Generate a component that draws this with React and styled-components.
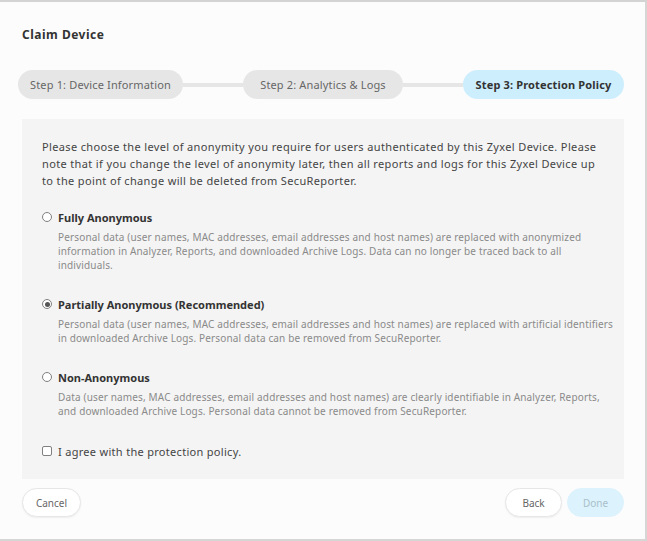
import React from "react";
import styled, { createGlobalStyle } from "styled-components";

const Global = createGlobalStyle`
  html, body { margin: 0; padding: 0; background: #ffffff; }
  * { box-sizing: border-box; }
  body { font-family: "Noto Sans", "Open Sans", Arial, sans-serif; }
`;

const Dialog = styled.div`
  width: 647px;
  height: 541px;
  background: #fcfcfc;
  border-top: 2px solid #d3d3d3;
  border-right: 2px solid #d6d6d6;
  border-bottom: 2px solid #d6d6d6;
  padding: 25px 21px 0 22px;
  display: flex;
  flex-direction: column;
`;

const Title = styled.h1`
  margin: 0;
  font-size: 12px;
  line-height: 16px;
  letter-spacing: 0.5px;
  font-weight: 700;
  color: #333;
`;

const Stepper = styled.div`
  display: flex;
  align-items: center;
  margin-top: 27px;
  margin-left: -4px;
`;

const Step = styled.div`
  height: 29px;
  width: ${(p) => p.$w}px;
  border-radius: 15px;
  display: flex;
  align-items: center;
  justify-content: center;
  font-size: 11px;
  letter-spacing: 0.15px;
  font-weight: ${(p) => (p.$active ? 700 : 400)};
  color: ${(p) => (p.$active ? "#333" : "#666")};
  background: ${(p) => (p.$active ? "#cdeefd" : "#e6e6e6")};
  white-space: nowrap;
`;

const Connector = styled.div`
  flex: 1;
  height: 4px;
  background: #e6e6e6;
`;

const Panel = styled.div`
  margin-top: 20px;
  background: #f4f4f4;
  padding: 19px 20px 20px 20px;
  display: flex;
  flex-direction: column;
`;

const Intro = styled.p`
  margin: 0;
  font-size: 11px;
  line-height: 17px;
  letter-spacing: 0.36px;
  white-space: nowrap;
  color: #444;
`;

const Option = styled.div`
  margin-top: ${(p) => p.$mt}px;
`;

const OptionHead = styled.label`
  display: flex;
  align-items: center;
  gap: 6px;
  height: 16px;
  font-size: 11px;
  font-weight: 700;
  color: #333;
`;

const Radio = styled.span`
  width: 10px;
  height: 10px;
  border-radius: 50%;
  border: 1px solid #808080;
  background: #fff;
  display: flex;
  align-items: center;
  justify-content: center;
  flex: none;
  &::after {
    content: "";
    width: 5px;
    height: 5px;
    border-radius: 50%;
    background: ${(p) => (p.$checked ? "#555" : "transparent")};
  }
`;

const Desc = styled.p`
  margin: 5px 0 0 16px;
  font-size: 10px;
  line-height: 14px;
  letter-spacing: 0.15px;
  white-space: nowrap;
  color: #8a8a8a;
`;

const Agree = styled.label`
  margin-top: 25px;
  display: flex;
  align-items: center;
  gap: 6px;
  height: 16px;
  font-size: 11px;
  letter-spacing: 0.3px;
  color: #444;
`;

const Box = styled.span`
  width: 10px;
  height: 10px;
  border: 1px solid #808080;
  border-radius: 2px;
  background: #fff;
  flex: none;
`;

const Footer = styled.div`
  display: flex;
  align-items: center;
  gap: 5px;
  margin-top: 9px;
`;

const Spacer = styled.div`
  flex: 1;
`;

const Button = styled.button`
  height: 29px;
  width: ${(p) => p.$w}px;
  border-radius: 15px;
  font-family: inherit;
  font-size: 10px;
  color: ${(p) => (p.$primary ? "#a9bfca" : "#666")};
  background: ${(p) => (p.$primary ? "#dcf2fc" : "#ffffff")};
  border: 1px solid ${(p) => (p.$primary ? "#dcf2fc" : "#e6e6e6")};
  box-shadow: ${(p) => (p.$primary ? "none" : "0 1px 2px rgba(0,0,0,0.06)")};
  padding: 0;
`;

export default function App() {
  return (
    <>
      <Global />
      <Dialog>
        <Title>Claim Device</Title>
        <Stepper>
          <Step $w={165}>Step 1: Device Information</Step>
          <Connector />
          <Step $w={160}>Step 2: Analytics &amp; Logs</Step>
          <Connector />
          <Step $w={161} $active>Step 3: Protection Policy</Step>
        </Stepper>
        <Panel>
          <Intro>
            Please choose the level of anonymity you require for users authenticated by this Zyxel Device. Please
            <br />
            note that if you change the level of anonymity later, then all reports and logs for this Zyxel Device up
            <br />
            to the point of change will be deleted from SecuReporter.
          </Intro>
          <Option $mt={20}>
            <OptionHead>
              <Radio />
              Fully Anonymous
            </OptionHead>
            <Desc>
              Personal data (user names, MAC addresses, email addresses and host names) are replaced with anonymized
              <br />
              information in Analyzer, Reports, and downloaded Archive Logs. Data can no longer be traced back to all
              <br />
              individuals.
            </Desc>
          </Option>
          <Option $mt={24}>
            <OptionHead>
              <Radio $checked />
              Partially Anonymous (Recommended)
            </OptionHead>
            <Desc>
              Personal data (user names, MAC addresses, email addresses and host names) are replaced with artificial identifiers
              <br />
              in downloaded Archive Logs. Personal data can be removed from SecuReporter.
            </Desc>
          </Option>
          <Option $mt={24}>
            <OptionHead>
              <Radio />
              Non-Anonymous
            </OptionHead>
            <Desc>
              Data (user names, MAC addresses, email addresses and host names) are clearly identifiable in Analyzer, Reports,
              <br />
              and downloaded Archive Logs. Personal data cannot be removed from SecuReporter.
            </Desc>
          </Option>
          <Agree>
            <Box />I agree with the protection policy.
          </Agree>
        </Panel>
        <Footer>
          <Button $w={59}>Cancel</Button>
          <Spacer />
          <Button $w={57}>Back</Button>
          <Button $w={57} $primary>Done</Button>
        </Footer>
      </Dialog>
    </>
  );
}
